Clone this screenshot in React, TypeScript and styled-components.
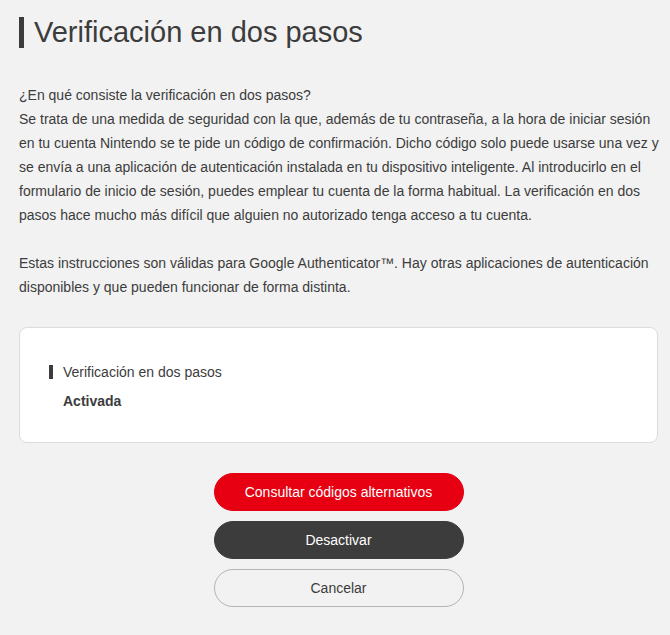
import React from "react";
import styled, { createGlobalStyle } from "styled-components";

const GlobalStyle = createGlobalStyle`
  html, body {
    margin: 0;
    padding: 0;
    background: #f2f2f2;
  }
  body {
    font-family: "Liberation Sans", Arial, sans-serif;
    color: #3c3c3c;
  }
`;

const Page = styled.div`
  padding: 17px 12px 28px 19px;
`;

const Title = styled.h1`
  margin: 0;
  padding-left: 10px;
  border-left: 5px solid #3c3c3c;
  font-size: 29px;
  font-weight: normal;
  line-height: 31px;
  color: #3c3c3c;
`;

const Text = styled.p`
  margin: 35px -8px 0 0;
  font-size: 14px;
  line-height: 24px;
  color: #3c3c3c;
  & + & {
    margin-top: 24px;
  }
`;

const Card = styled.div`
  margin-top: 28px;
  background: #fff;
  border: 1px solid #dcdcdc;
  border-radius: 8px;
  padding: 34px 29px 31px;
`;

const Label = styled.div`
  border-left: 4px solid #3c3c3c;
  padding-left: 10px;
  font-size: 14px;
  line-height: 14px;
  margin: 3px 0 0;
`;

const Value = styled.div`
  margin: 12px 0 0 14px;
  font-size: 14px;
  font-weight: bold;
  line-height: 20px;
`;

const Actions = styled.div`
  margin-top: 30px;
  display: flex;
  flex-direction: column;
  align-items: center;
  gap: 10px;
`;

const Button = styled.button<{ $variant: "red" | "dark" | "outline" }>`
  width: 250px;
  height: 38px;
  border-radius: 19px;
  font-family: "Liberation Sans", Arial, sans-serif;
  font-size: 14px;
  cursor: pointer;
  background: ${(p) =>
    p.$variant === "red" ? "#e60012" : p.$variant === "dark" ? "#3c3c3c" : "transparent"};
  color: ${(p) => (p.$variant === "outline" ? "#3c3c3c" : "#fff")};
  border: 1px solid
    ${(p) =>
      p.$variant === "red" ? "#e60012" : p.$variant === "dark" ? "#3c3c3c" : "#b4b4b4"};
`;

export default function App() {
  return (
    <Page>
      <GlobalStyle />
      <Title>Verificación en dos pasos</Title>
      <Text>
        ¿En qué consiste la verificación en dos pasos?
        <br />
        Se trata de una medida de seguridad con la que, además de tu contraseña, a la hora de
        iniciar sesión en tu cuenta Nintendo se te pide un código de confirmación. Dicho código
        solo puede usarse una vez y se envía a una aplicación de autenticación instalada en tu
        dispositivo inteligente. Al introducirlo en el formulario de inicio de sesión, puedes
        emplear tu cuenta de la forma habitual. La verificación en dos pasos hace mucho más
        difícil que alguien no autorizado tenga acceso a tu cuenta.
      </Text>
      <Text>
        Estas instrucciones son válidas para Google Authenticator™. Hay otras aplicaciones de
        autenticación disponibles y que pueden funcionar de forma distinta.
      </Text>
      <Card>
        <Label>Verificación en dos pasos</Label>
        <Value>Activada</Value>
      </Card>
      <Actions>
        <Button $variant="red">Consultar códigos alternativos</Button>
        <Button $variant="dark">Desactivar</Button>
        <Button $variant="outline">Cancelar</Button>
      </Actions>
    </Page>
  );
}
